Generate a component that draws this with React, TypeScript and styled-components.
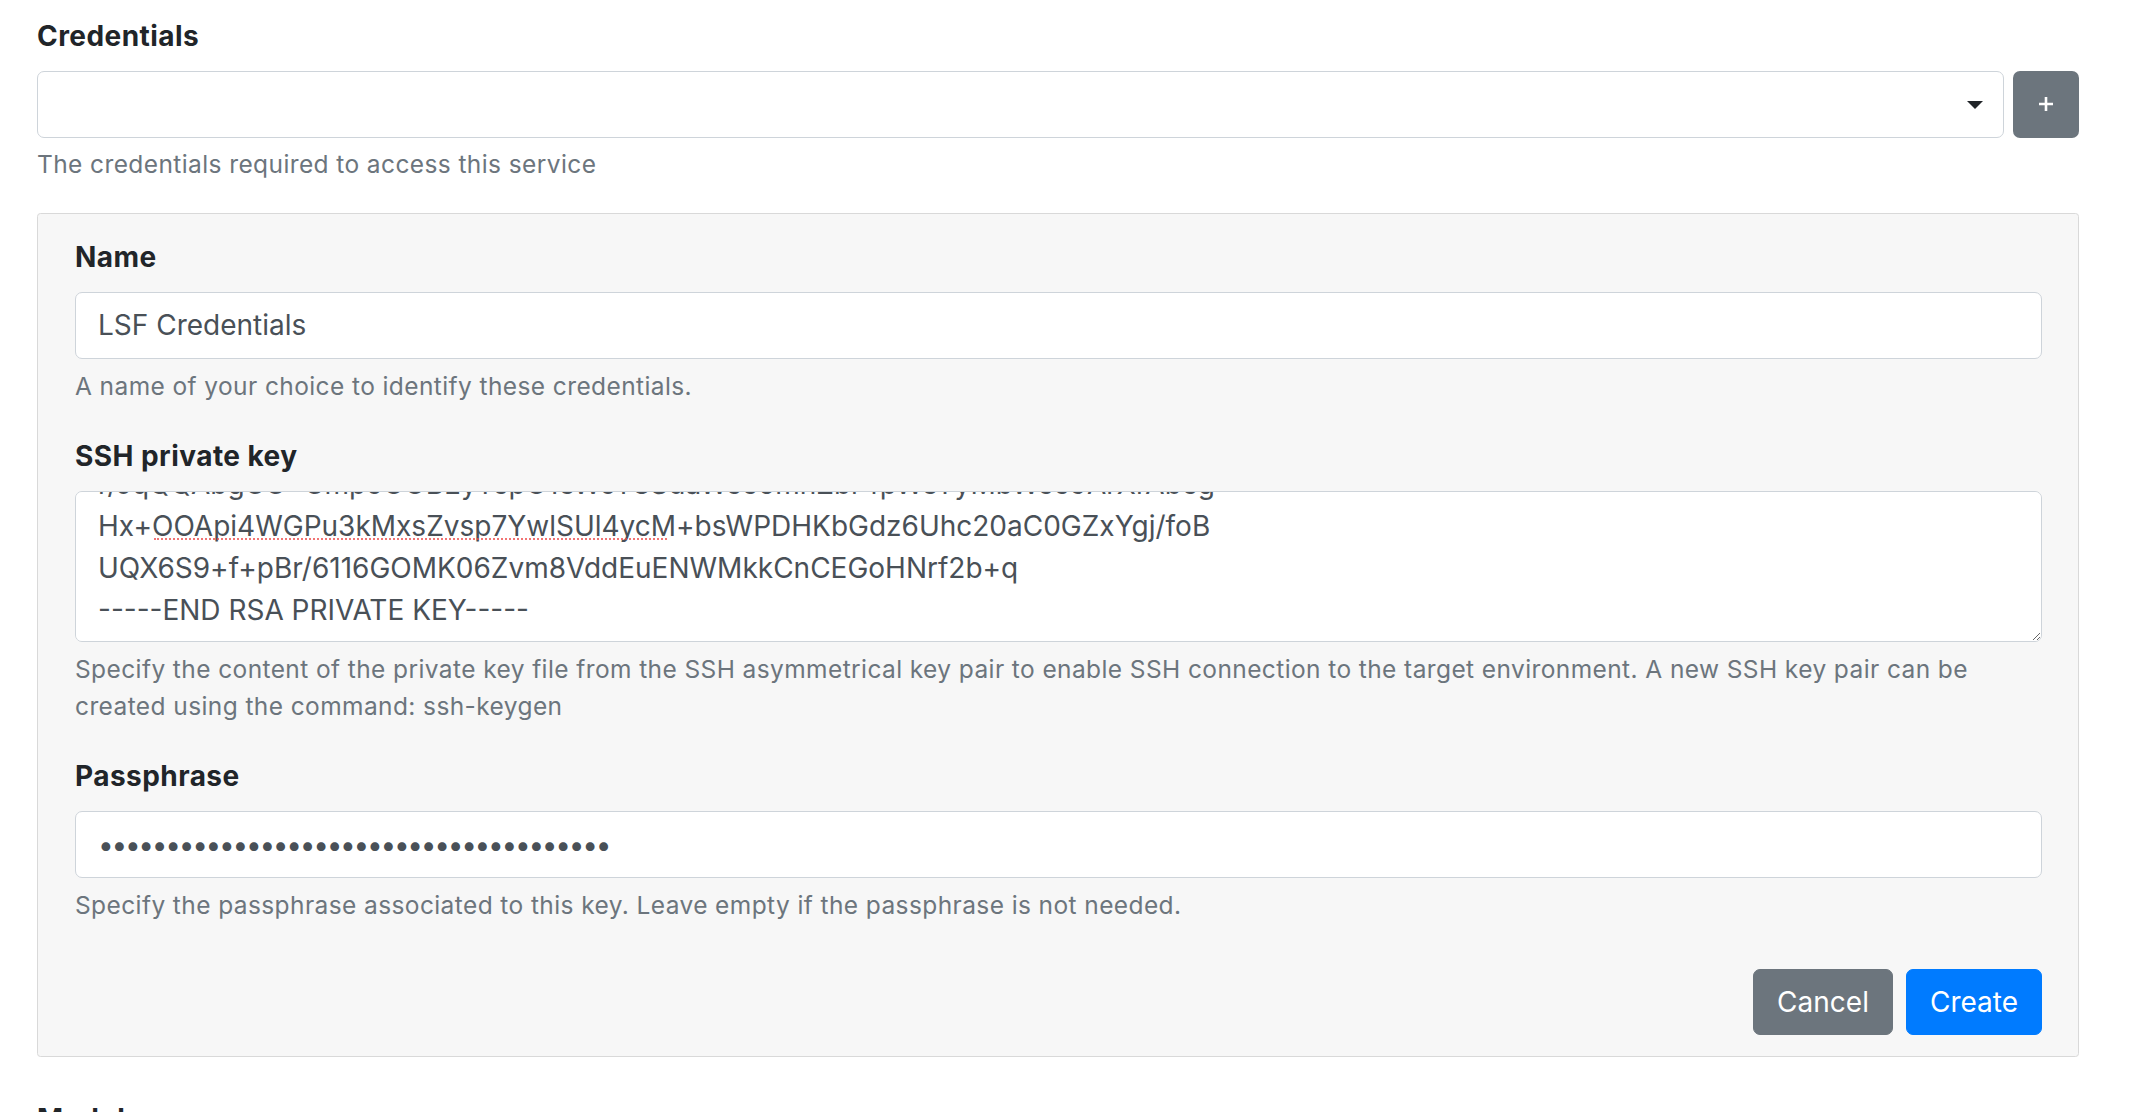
import React, { useEffect, useRef } from "react";
import styled, { createGlobalStyle } from "styled-components";

const GlobalStyle = createGlobalStyle`
  html, body { margin: 0; padding: 0; background: #ffffff; }
  body { font-family: Inter, "Noto Sans", "Liberation Sans", sans-serif; }
  *, *::before, *::after { box-sizing: border-box; }
`;

const Page = styled.div`
  padding: 15px 55px 0 37px;
  font-family: Inter, "Noto Sans", "Liberation Sans", sans-serif;
  color: #212529;
`;

const FormGroup = styled.div<{ $mb?: number }>`
  margin-bottom: ${(p) => (p.$mb ?? 31)}px;
`;

const Label = styled.label`
  display: block;
  font-size: 28px;
  font-weight: 700;
  line-height: 42px;
  letter-spacing: 0.45px;
  margin-bottom: 14px;
  color: #212529;
`;

const Help = styled.small<{ $mt?: number }>`
  display: block;
  margin-top: ${(p) => (p.$mt ?? 9)}px;
  font-size: 24.5px;
  line-height: 36.75px;
  letter-spacing: 0.4px;
  color: #6c757d;
`;

const InputRow = styled.div`
  display: flex;
  align-items: stretch;
  gap: 8.75px;
`;

const SelectWrap = styled.div`
  position: relative;
  flex: 1;
`;

const Select = styled.select`
  appearance: none;
  -webkit-appearance: none;
  display: block;
  width: 100%;
  height: 66.5px;
  padding: 10.5px 22px;
  font: inherit;
  font-size: 28px;
  color: #495057;
  background: #ffffff;
  border: 1.75px solid #ced4da;
  border-radius: 7px;
  outline: none;
`;

const Caret = styled.svg`
  position: absolute;
  right: 21px;
  top: 30px;
  pointer-events: none;
`;

const IconButton = styled.button`
  width: 66.5px;
  height: 66.5px;
  flex: none;
  display: flex;
  align-items: center;
  justify-content: center;
  background: #6c757d;
  border: none;
  border-radius: 7px;
  padding: 0;
  color: #ffffff;
`;

const Panel = styled.section`
  background: #f7f7f7;
  border: 1.75px solid #d9d9d9;
  border-radius: 3.5px;
  padding: 22px 36px 21px 37px;
  margin-bottom: 41px;
`;

const controlBase = `
  display: block;
  width: 100%;
  padding: 10.5px 22px;
  font-family: Inter, "Noto Sans", "Liberation Sans", sans-serif;
  font-size: 28px;
  line-height: 42px;
  color: #495057;
  background: #ffffff;
  border: 1.75px solid #ced4da;
  border-radius: 7px;
  outline: none;
  margin: 0;
`;

const TextInput = styled.input<{ $masked?: boolean }>`
  ${controlBase}
  height: 66.5px;
  letter-spacing: ${(p) => (p.$masked ? "-2.3px" : "normal")};
`;

const AreaWrap = styled.div`
  position: relative;
`;

const TextArea = styled.textarea`
  ${controlBase}
  height: 150.5px;
  resize: vertical;
  white-space: pre;
  overflow: auto;
  scrollbar-width: none;
  &::-webkit-scrollbar { display: none; }
`;

const SpellMark = styled.span<{ $left: number; $top: number; $width: number }>`
  position: absolute;
  left: ${(p) => p.$left}px;
  top: ${(p) => p.$top}px;
  width: ${(p) => p.$width}px;
  height: 0;
  border-bottom: 2.5px dotted rgba(236, 70, 70, 0.75);
  pointer-events: none;
`;

const ButtonRow = styled.div`
  display: flex;
  justify-content: flex-end;
  gap: 13px;
  padding-top: 14px;
`;

const Button = styled.button<{ $variant: "primary" | "secondary" }>`
  height: 66.5px;
  padding: 10.5px 23px;
  font-family: Inter, "Noto Sans", "Liberation Sans", sans-serif;
  font-size: 28px;
  line-height: 42px;
  font-weight: 400;
  color: #ffffff;
  border-radius: 7px;
  border: 1.75px solid ${(p) => (p.$variant === "primary" ? "#007bff" : "#6c757d")};
  background: ${(p) => (p.$variant === "primary" ? "#007bff" : "#6c757d")};
`;

const keyText = [
  "-----BEGIN RSA PRIVATE KEY-----",
  "MIIEpAIBAAKCAQEAvX3p7q9dQ2kLm0gTzR5sYwN8bHc1fJxA4uV6eKiP0oQ2rS9t",
  "Wg7hJk3LmN5pQr8sTu1vWx2yZa4bCd6eFg8hIj0kLm2nOp4qRs6tUv8wXy0zA1bC",
  "r/JqQQAbgCC+CmpoOOBEyYcpO1eWoY8SdaWcc6mhZbr4pWeYyMbWcc9ArXrAbcg",
  "Hx+OOApi4WGPu3kMxsZvsp7YwlSUl4ycM+bsWPDHKbGdz6Uhc20aC0GZxYgj/foB",
  "UQX6S9+f+pBr/6116GOMK06Zvm8VddEuENWMkkCnCEGoHNrf2b+q",
  "-----END RSA PRIVATE KEY-----",
].join("\n");

export default function App() {
  const areaRef = useRef<HTMLTextAreaElement>(null);

  useEffect(() => {
    const el = areaRef.current;
    if (el) el.scrollTop = el.scrollHeight;
  }, []);

  return (
    <Page>
      <GlobalStyle />
      <FormGroup $mb={30.75}>
        <Label>Credentials</Label>
        <InputRow>
          <SelectWrap>
            <Select defaultValue="">
              <option value=""></option>
            </Select>
            <Caret width="16" height="8" viewBox="0 0 16 8">
              <path d="M0 0 H16 L8 8 Z" fill="#212529" />
            </Caret>
          </SelectWrap>
          <IconButton aria-label="Add credentials">
            <svg width="16" height="16" viewBox="0 0 16 16">
              <path d="M8 1 V15 M1 8 H15" stroke="#ffffff" strokeWidth="2.6" />
            </svg>
          </IconButton>
        </InputRow>
        <Help $mt={8}>The credentials required to access this service</Help>
      </FormGroup>

      <Panel>
        <FormGroup>
          <Label>Name</Label>
          <TextInput type="text" defaultValue="LSF Credentials" />
          <Help>A name of your choice to identify these credentials.</Help>
        </FormGroup>

        <FormGroup>
          <Label>SSH private key</Label>
          <AreaWrap>
            <TextArea ref={areaRef} rows={3} spellCheck={false} defaultValue={keyText} />
            <SpellMark $left={79} $top={47} $width={513} />
          </AreaWrap>
          <Help>
            Specify the content of the private key file from the SSH asymmetrical key pair to enable SSH
            connection to the target environment. A new SSH key pair can be created using the command:
            ssh-keygen
          </Help>
        </FormGroup>

        <FormGroup>
          <Label>Passphrase</Label>
          <TextInput $masked type="password" defaultValue="abcdefghijklmnopqrstuvwxyz0123456789AB" />
          <Help>Specify the passphrase associated to this key. Leave empty if the passphrase is not needed.</Help>
        </FormGroup>

        <ButtonRow>
          <Button $variant="secondary">Cancel</Button>
          <Button $variant="primary">Create</Button>
        </ButtonRow>
      </Panel>

      <FormGroup>
        <Label>Modules</Label>
      </FormGroup>
    </Page>
  );
}
